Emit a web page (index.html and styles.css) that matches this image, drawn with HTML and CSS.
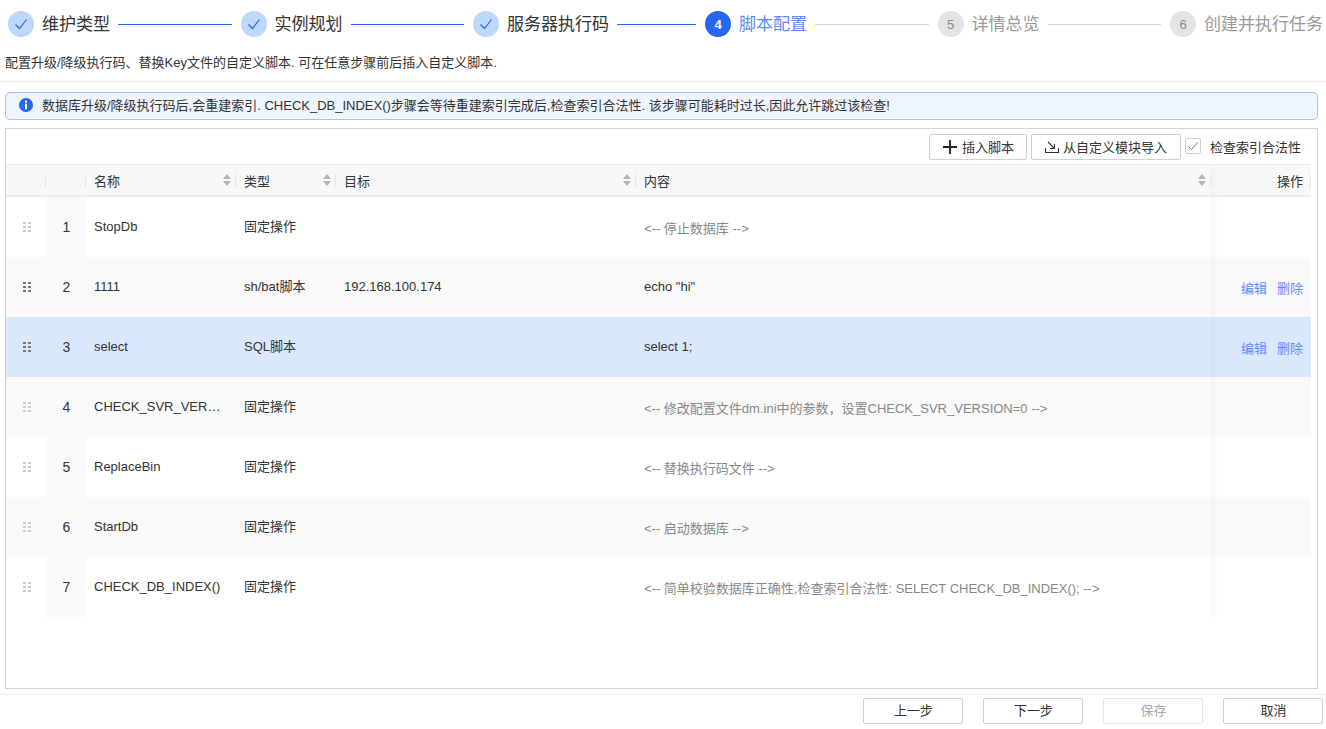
FILE: index.html
```html
<!doctype html>
<html lang="zh-CN">
<head>
    <meta charset="UTF-8">
    <title>脚本配置</title>
    <link rel="stylesheet" href="styles.css">
</head>
<body>
    <div class="steps">
        <div class="step done">
            <span class="dot"><svg width="14" height="14" viewBox="0 0 14 14"><path d="M1.5 7.5 5.5 11.5 12.5 2.5" fill="none" stroke="#2468f2" stroke-width="1.2"/></svg></span>
            <span class="name">维护类型</span>
        </div>
        <i class="line on"></i>
        <div class="step done">
            <span class="dot"><svg width="14" height="14" viewBox="0 0 14 14"><path d="M1.5 7.5 5.5 11.5 12.5 2.5" fill="none" stroke="#2468f2" stroke-width="1.2"/></svg></span>
            <span class="name">实例规划</span>
        </div>
        <i class="line on"></i>
        <div class="step done">
            <span class="dot"><svg width="14" height="14" viewBox="0 0 14 14"><path d="M1.5 7.5 5.5 11.5 12.5 2.5" fill="none" stroke="#2468f2" stroke-width="1.2"/></svg></span>
            <span class="name">服务器执行码</span>
        </div>
        <i class="line on short"></i>
        <div class="step active">
            <span class="dot">4</span>
            <span class="name">脚本配置</span>
        </div>
        <i class="line"></i>
        <div class="step">
            <span class="dot">5</span>
            <span class="name">详情总览</span>
        </div>
        <i class="line"></i>
        <div class="step">
            <span class="dot">6</span>
            <span class="name">创建并执行任务</span>
        </div>
    </div>

    <p class="desc">配置升级/降级执行码、替换Key文件的自定义脚本. 可在任意步骤前后插入自定义脚本.</p>

    <div class="alert">
        <svg width="14" height="14" viewBox="0 0 14 14">
            <circle cx="7" cy="7" r="7" fill="#2468f2"/>
            <rect x="6" y="2.6" width="2" height="2" fill="#fff"/>
            <rect x="6" y="5.6" width="2" height="5.8" fill="#fff"/>
        </svg>
        <span>数据库升级/降级执行码后,会重建索引. CHECK_DB_INDEX()步骤会等待重建索引完成后,检查索引合法性. 该步骤可能耗时过长,因此允许跳过该检查!</span>
    </div>

    <div class="panel">
        <div class="toolbar">
            <button class="btn">
                <svg width="14" height="14" viewBox="0 0 14 14"><path d="M7 0V14M0 7H14" stroke="#222" stroke-width="1.8"/></svg>
                插入脚本
            </button>
            <button class="btn import">
                <svg width="14" height="14" viewBox="0 0 14 14"><path d="M.5 8V12.5H13.5V8M3 2 9 8M9.5 4V8.5H5" fill="none" stroke="#333" stroke-width="1.1"/></svg>
                从自定义模块导入
            </button>
            <label class="check">
                <span class="box"><svg width="12" height="12" viewBox="0 0 12 12"><path d="M1.5 6.5 4.5 9.5 10.5 2.5" fill="none" stroke="#777" stroke-width="1"/></svg></span>
                检查索引合法性
            </label>
        </div>

        <table class="grid">
            <colgroup>
                <col class="c-drag"><col class="c-idx"><col class="c-name"><col class="c-type"><col class="c-target"><col class="c-content"><col class="c-op">
            </colgroup>
            <thead>
                <tr>
                    <th></th>
                    <th></th>
                    <th><span class="sort">名称</span></th>
                    <th><span class="sort">类型</span></th>
                    <th><span class="sort">目标</span></th>
                    <th><span class="sort">内容</span></th>
                    <th class="op">操作</th>
                </tr>
            </thead>
            <tbody>
            </tbody>
        </table>
    </div>

    <div class="footer">
        <button class="btn wide">上一步</button>
        <button class="btn wide">下一步</button>
        <button class="btn wide" disabled>保存</button>
        <button class="btn wide">取消</button>
    </div>

<script>
    let rows=[
        {name:"StopDb",type:"固定操作",target:"",content:"<-- 停止数据库 -->",fixed:true},
        {name:"1111",type:"sh/bat脚本",target:"192.168.100.174",content:'echo "hi"'},
        {name:"select",type:"SQL脚本",target:"",content:"select 1;",current:true},
        {name:"CHECK_SVR_VERSION",type:"固定操作",target:"",content:"<-- 修改配置文件dm.ini中的参数，设置CHECK_SVR_VERSION=0 -->",fixed:true},
        {name:"ReplaceBin",type:"固定操作",target:"",content:"<-- 替换执行码文件 -->",fixed:true},
        {name:"StartDb",type:"固定操作",target:"",content:"<-- 启动数据库 -->",fixed:true},
        {name:"CHECK_DB_INDEX()",type:"固定操作",target:"",content:"<-- 简单校验数据库正确性,检查索引合法性: SELECT CHECK_DB_INDEX(); -->",fixed:true},
    ];
    let esc=s=>s.replace(/</g,"&lt;").replace(/>/g,"&gt;");
    let dots=`<svg width="8" height="12" viewBox="0 0 8 12"><path d="M0 1H3V3H0ZM5 1H8V3H5ZM0 5H3V7H0ZM5 5H8V7H5ZM0 9H3V11H0ZM5 9H8V11H5Z" fill="currentColor"/></svg>`;
    let tbody=document.querySelector("tbody");
    rows.forEach((item,i)=>{
        let tr=document.createElement("tr");
        if(item.current) tr.className="current";
        tr.innerHTML=`<td class="drag ${item.fixed?"":"live"}">${dots}</td>`
            +`<td class="idx">${i+1}</td>`
            +`<td class="name">${item.name}</td>`
            +`<td class="kind">${item.type}</td>`
            +`<td>${item.target}</td>`
            +`<td class="${item.fixed?"note":""}">${esc(item.content)}</td>`
            +`<td class="op">${item.fixed?"":'<a>编辑</a><a>删除</a>'}</td>`;
        tbody.append(tr);
    });
</script>
</body>
</html>
```

FILE: styles.css
```css
* {
    padding: 0;
    margin: 0;
    box-sizing: border-box;
}
body {
    width: 1326px;
    height: 729px;
    overflow: hidden;
    background: #fff;
    color: #333;
    font: 13px "Liberation Sans", "Noto Sans CJK SC", sans-serif;
}
.steps {
    display: flex;
    align-items: center;
    height: 26px;
    margin-top: 11px;
    padding: 0 3px 0 8px;
}
.step {
    display: flex;
    align-items: center;
    gap: 8px;
    font-size: 17px;
    color: #999;
    white-space: nowrap;
}
.step .name {
    margin-bottom: 4px;
}
.dot {
    width: 26px;
    height: 26px;
    border-radius: 50%;
    display: flex;
    align-items: center;
    justify-content: center;
    background: #e3e3e3;
    color: #888;
    font-size: 13px;
}
.step.done {
    color: #333;
}
.step.done .dot {
    background: #bdd7fd;
}
.step.active {
    color: #5a8cf5;
}
.step.active .dot {
    background: #2468f2;
    color: #fff;
    font-weight: bold;
}
.line {
    flex: 1;
    height: 1px;
    margin: 0 9px 0 8px;
    background: #d4d4d4;
}
.line.on {
    background: #2468f2;
}
.line.short {
    flex: 0 0 79px;
}
.desc {
    height: 45px;
    padding: 17px 0 0 5px;
    line-height: 17px;
    border-bottom: 1px solid #ececec;
}
.alert {
    display: flex;
    align-items: center;
    gap: 9px;
    height: 28px;
    margin: 10px 8px 0 5px;
    padding: 0 0 3px 13px;
    background: #eef5fe;
    border: 1px solid #9cc6f6;
    border-radius: 5px;
}
.panel {
    height: 561px;
    margin: 8px 8px 0 5px;
    border: 1px solid #d4d4d4;
}
.toolbar {
    display: flex;
    align-items: center;
    justify-content: flex-end;
    gap: 4px;
    height: 35px;
    padding: 1px 16px 0 0;
}
.btn {
    display: inline-flex;
    align-items: center;
    justify-content: center;
    gap: 5px;
    height: 26px;
    padding: 0 12px 2px 13px;
    background: #fff;
    border: 1px solid #d0d0d0;
    border-radius: 2px;
    color: #333;
    font: 13px "Liberation Sans", "Noto Sans CJK SC", sans-serif;
}
.btn svg {
    margin-top: 1px;
}
.btn.import {
    gap: 4px;
    padding-right: 13px;
}
.btn:disabled {
    border-color: #e6e6e6;
    color: #aaa;
}
.check {
    display: flex;
    align-items: center;
    gap: 9px;
    padding-bottom: 2px;
}
.box {
    width: 16px;
    height: 16px;
    display: flex;
    align-items: center;
    justify-content: center;
    border: 1px solid #cfcfcf;
    border-radius: 2px;
}
.grid {
    width: 1305px;
    table-layout: fixed;
    border-collapse: separate;
    border-spacing: 0;
}
.c-drag, .c-idx { width: 40px; }
.c-name { width: 150px; }
.c-type { width: 100px; }
.c-target { width: 300px; }
.c-content { width: 575px; }
.c-op { width: 100px; }
th {
    position: relative;
    height: 33px;
    padding: 0 8px;
    background: #f8f8f8;
    border-top: 1px solid #ececec;
    border-bottom: 2px solid #ececec;
    font-weight: normal;
    text-align: left;
}
th::after {
    content: "";
    position: absolute;
    right: 0;
    top: 9px;
    height: 13px;
    width: 1px;
    background: #e6e6e6;
}
.sort {
    display: block;
    position: relative;
}
.sort::before, .sort::after {
    content: "";
    position: absolute;
    right: -3px;
    border: 4px solid transparent;
}
.sort::before {
    top: 3px;
    border-bottom: 5px solid #b4b4b4;
    border-top-width: 0;
}
.sort::after {
    top: 10px;
    border-top: 5px solid #b4b4b4;
    border-bottom-width: 0;
}
td {
    height: 60px;
    padding: 0 8px 2px;
    white-space: nowrap;
    overflow: hidden;
    text-overflow: ellipsis;
}
td.kind {
    padding-bottom: 4px;
}
tbody tr:nth-child(even) {
    background: #f9f9f9;
}
tbody tr.current {
    background: #dae8fd;
}
.op {
    text-align: right;
}
td.op {
    padding-bottom: 0;
}
th.op, td.op {
    background-image: linear-gradient(to right, rgba(0,0,0,0.025), rgba(0,0,0,0) 8px);
}
th.op {
    background-color: #f8f8f8;
}
td.op a {
    margin-left: 10px;
    color: #5b8ff9;
}
.drag {
    padding: 0 0 0 17px;
    color: #ccc;
    line-height: 0;
}
.drag.live {
    color: #777;
}
tbody tr:nth-child(n) .idx {
    text-align: center;
    font-size: 14px;
    padding: 0 0 0 1px;
}
tbody tr:nth-child(odd):not(.current) .idx {
    background: #f9f9f9;
}
td.note {
    color: #888;
    padding-bottom: 0;
}
.footer {
    display: flex;
    justify-content: flex-end;
    gap: 20px;
    height: 35px;
    margin-top: 5px;
    padding: 3px 3px 0 0;
    border-top: 1px solid #ececec;
}
.btn.wide {
    width: 100px;
    padding-bottom: 3px;
}
```
